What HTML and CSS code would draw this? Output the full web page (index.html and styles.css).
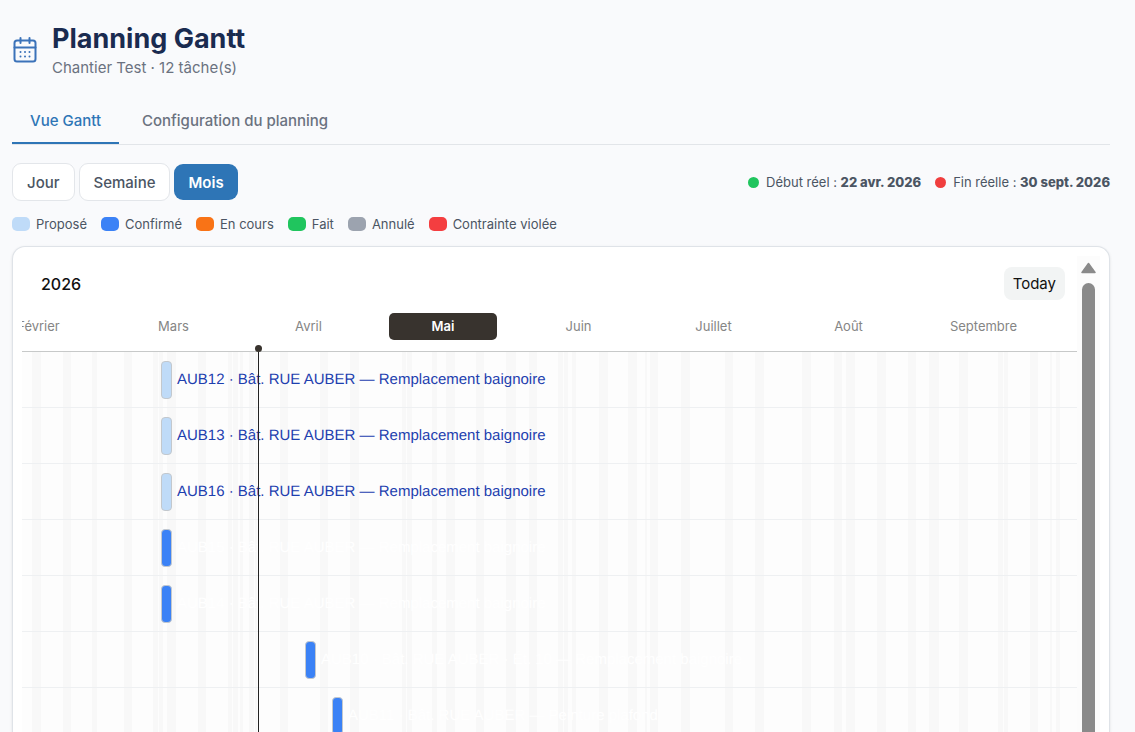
FILE: index.html
```html
<!DOCTYPE html>
<html lang="fr">
<head>
<meta charset="utf-8">
<meta name="viewport" content="width=device-width, initial-scale=1">
<title>Planning Gantt</title>
<link rel="stylesheet" href="styles.css">
</head>
<body>
<main class="page">
  <header class="page-header">
    <svg class="page-icon" viewBox="0 0 24 26" fill="none" stroke="currentColor" stroke-width="2" stroke-linecap="round" aria-hidden="true">
      <rect x="1.5" y="3.5" width="21" height="21" rx="2.5"/>
      <path d="M1.5 10.5h21M7.5 1v5M16.5 1v5"/>
      <path d="M7.5 15h.01M12 15h.01M16.5 15h.01M7.5 19.5h.01M12 19.5h.01M16.5 19.5h.01"/>
    </svg>
    <div>
      <h1 class="title">Planning Gantt</h1>
      <p class="subtitle">Chantier Test · 12 tâche(s)</p>
    </div>
  </header>

  <nav class="tabs" role="tablist">
    <button class="tab tab-active" type="button" role="tab" aria-selected="true">Vue Gantt</button>
    <button class="tab" type="button" role="tab" aria-selected="false">Configuration du planning</button>
  </nav>

  <div class="toolbar">
    <div class="modes">
      <button class="mode" type="button">Jour</button>
      <button class="mode" type="button">Semaine</button>
      <button class="mode mode-active" type="button">Mois</button>
    </div>
    <div class="dates">
      <span class="date"><i class="dot dot-start"></i><span>Début réel : <strong>22 avr. 2026</strong></span></span>
      <span class="date"><i class="dot dot-end"></i><span>Fin réelle : <strong>30 sept. 2026</strong></span></span>
    </div>
  </div>

  <ul class="legend">
    <li><i class="swatch proposed"></i>Proposé</li>
    <li><i class="swatch confirmed"></i>Confirmé</li>
    <li><i class="swatch progress"></i>En cours</li>
    <li><i class="swatch done"></i>Fait</li>
    <li><i class="swatch cancelled"></i>Annulé</li>
    <li><i class="swatch violated"></i>Contrainte violée</li>
  </ul>

  <section class="card">
    <div class="gantt">
      <div class="gantt-top">
        <span class="year">2026</span>
        <button class="today" type="button">Today</button>
      </div>
      <div class="months">
        <span class="month">Février</span>
        <span class="month">Mars</span>
        <span class="month">Avril</span>
        <span class="month month-current"><b>Mai</b></span>
        <span class="month">Juin</span>
        <span class="month">Juillet</span>
        <span class="month">Août</span>
        <span class="month">Septembre</span>
      </div>
      <div class="chart">
        <svg class="stripes" aria-hidden="true">
          <g>
            <rect x="10" width="9"/><rect x="41" width="8"/><rect x="70" width="5"/><rect x="102" width="8"/>
            <rect x="131" width="5"/><rect x="137" width="4"/><rect x="145" width="9"/><rect x="176" width="8"/>
            <rect x="206" width="4"/><rect x="211" width="5"/><rect x="218" width="3"/><rect x="227" width="5"/>
            <rect x="233" width="2"/><rect x="258" width="8"/><rect x="298" width="8"/><rect x="328" width="9"/>
            <rect x="380" width="4"/><rect x="385" width="5"/><rect x="410" width="5"/><rect x="424" width="9"/>
            <rect x="454" width="8"/><rect x="484" width="10"/><rect x="507" width="8"/><rect x="536" width="5"/>
            <rect x="542" width="4"/><rect x="550" width="4"/><rect x="577" width="9"/><rect x="606" width="9"/>
            <rect x="623" width="2"/><rect x="628" width="8"/><rect x="659" width="9"/><rect x="703" width="8"/>
            <rect x="733" width="9"/><rect x="780" width="9"/><rect x="812" width="8"/><rect x="824" width="9"/>
            <rect x="855" width="9"/><rect x="886" width="8"/><rect x="907" width="10"/><rect x="937" width="9"/>
            <rect x="976" width="5"/><rect x="982" width="4"/><rect x="1008" width="8"/><rect x="1028" width="2"/>
            <rect x="1034" width="4"/>
          </g>
        </svg>
        <ol class="rows">
          <li class="row at-march"><i class="bar proposed"></i><span class="label label-dark">AUB12 · Bât. RUE AUBER — Remplacement baignoire</span></li>
          <li class="row at-march"><i class="bar proposed"></i><span class="label label-dark">AUB13 · Bât. RUE AUBER — Remplacement baignoire</span></li>
          <li class="row at-march"><i class="bar proposed"></i><span class="label label-dark">AUB16 · Bât. RUE AUBER — Remplacement baignoire</span></li>
          <li class="row at-march"><i class="bar confirmed"></i><span class="label">AUB15 · Bât. RUE AUBER — Remplacement baignoire</span></li>
          <li class="row at-march"><i class="bar confirmed"></i><span class="label">AUB14 · Bât. RUE AUBER — Remplacement baignoire</span></li>
          <li class="row at-april"><i class="bar confirmed"></i><span class="label">AUB10 · Bât. RUE AUBER · Ét. 10 — Remplacement baignoire</span></li>
          <li class="row at-mid-april"><i class="bar confirmed"></i><span class="label">AUB11 · Bât. RUE AUBER — Peinture plafond</span></li>
        </ol>
        <div class="now"></div>
      </div>
    </div>
    <div class="scrollbar" aria-hidden="true">
      <svg class="arrow" viewBox="0 0 15 12"><path d="M7.5 1.5 14 10.5H1Z" fill="#8a8a8a" stroke="#8a8a8a" stroke-width="1.5" stroke-linejoin="round"/></svg>
      <div class="thumb"></div>
    </div>
  </section>
</main>
</body>
</html>
```
FILE: styles.css
```css
* { box-sizing: border-box; }

body {
  margin: 0;
  height: 100vh;
  overflow: hidden;
  background: #f9fafc;
  color: #4b5563;
  font-family: Inter, "Liberation Sans", sans-serif;
}

button { font: inherit; cursor: pointer; }

.page {
  display: flex;
  flex-direction: column;
  height: 100%;
  padding: 20px 25px 0 12px;
}

.page-header {
  display: flex;
  align-items: center;
  gap: 14px;
  height: 60px;
}

.page-icon { width: 24px; height: 26px; margin: 0 1px; color: #3b72b9; }

.title {
  margin: 0;
  color: #1a2b50;
  font-size: 27px;
  font-weight: 700;
  line-height: 36px;
}

.subtitle {
  margin: 0;
  color: #6b7280;
  font-size: 15px;
  line-height: 22px;
}

.tabs {
  display: flex;
  gap: 5px;
  margin-top: 19px;
  border-bottom: 1px solid #e2e5e9;
}

.tab {
  height: 45px;
  padding: 0 18px;
  border: 0;
  border-bottom: 2px solid transparent;
  background: none;
  color: #6b7280;
  font-size: 15px;
  font-weight: 500;
}

.tab-active { border-color: #2e75b6; color: #2e75b6; }

.toolbar {
  display: flex;
  justify-content: space-between;
  align-items: center;
  margin-top: 18px;
}

.modes { display: flex; align-items: center; gap: 4px; }

.mode {
  height: 38px;
  padding: 0 14px;
  border: 1px solid #e3e6ea;
  border-radius: 9px;
  background: #fff;
  color: #4b5563;
  font-size: 15px;
  font-weight: 500;
}

.mode-active {
  height: 36px;
  border: 0;
  background: #2e75b6;
  color: #fff;
  font-weight: 600;
}

.dates, .date { display: flex; align-items: center; }
.dates { gap: 14px; font-size: 13px; }
.date { gap: 7px; }
.date strong { font-weight: 800; }

.dot { width: 11px; height: 11px; border-radius: 50%; }
.dot-start { background: #20c55e; }
.dot-end { background: #f03e3e; }

.legend {
  display: flex;
  gap: 14px;
  margin: 13px 0 0;
  padding: 0;
  list-style: none;
  font-size: 13px;
  line-height: 20px;
}

.legend li { display: flex; align-items: center; gap: 6px; }
.swatch { width: 18px; height: 14px; border-radius: 5px; }

.proposed { background: #bfdbf8; }
.confirmed { background: #3b82f6; }
.progress { background: #f97316; }
.done { background: #20c55e; }
.cancelled { background: #9ca3af; }
.violated { background: #f43e40; }

.card {
  display: flex;
  flex: 1;
  min-height: 0;
  margin-top: 12px;
  padding: 9px 9px 0;
  border: 1px solid #dfe3e8;
  border-bottom: 0;
  border-radius: 13px 13px 0 0;
  background: #fff;
  box-shadow: 0 1px 3px #0000001a;
  overflow: hidden;
}

.gantt {
  display: flex;
  flex: 1;
  flex-direction: column;
  min-width: 0;
}

.gantt-top {
  display: flex;
  justify-content: space-between;
  align-items: center;
  padding: 11px 12px 0 19px;
  color: #111;
}

.year { font-size: 16px; font-weight: 500; }

.today {
  height: 33px;
  padding: 0 9px;
  border: 0;
  border-radius: 8px;
  background: #f2f4f4;
  color: #111;
  font-size: 15px;
}

.months {
  display: flex;
  height: 52px;
  padding-top: 13px;
  border-bottom: 1px solid #c7c9c9;
  overflow: hidden;
  color: #858585;
  font-size: 13px;
  line-height: 27px;
}

.month { flex: 0 0 135px; text-align: center; }
.month:first-child { margin-left: -51px; }

.month-current { padding: 0 14px 0 13px; }

.month-current b {
  display: block;
  border-radius: 5px;
  background: #38332e;
  color: #fff;
  font-weight: 600;
}

.chart {
  position: relative;
  flex: 1;
  min-height: 0;
  background: #fdfdfd;
}

.stripes {
  position: absolute;
  inset: 0;
  width: 100%;
  height: 100%;
}

.stripes rect { height: 100%; fill: #f8f8f8; }

.rows {
  position: relative;
  height: 100%;
  margin: 0;
  padding: 0;
  overflow: hidden;
  list-style: none;
}

.row {
  display: flex;
  align-items: center;
  gap: 5px;
  height: 56px;
  border-bottom: 1px solid #eef0f2;
}

.at-march { padding-left: 139px; }
.at-april { padding-left: 283px; }
.at-mid-april { padding-left: 310px; }

.bar {
  width: 11px;
  height: 38px;
  border: 1px solid #c3c8cd;
  border-radius: 4px;
}

.label {
  color: #fff;
  font-family: "Liberation Sans", Arial, sans-serif;
  font-size: 15px;
  text-rendering: geometricPrecision;
  white-space: nowrap;
}

.label-dark { color: #1e40af; }

.now {
  position: absolute;
  top: 0;
  bottom: 0;
  left: 236px;
  width: 1px;
  background: #222;
}

.now::before {
  content: "";
  position: absolute;
  top: -7px;
  left: -3px;
  width: 7px;
  height: 7px;
  border-radius: 50%;
  background: #38332e;
}

.scrollbar {
  display: flex;
  flex: 0 0 23px;
  flex-direction: column;
  align-items: center;
  gap: 9px;
  padding-top: 6px;
  background: #fcfcfc;
}

.arrow { width: 15px; height: 12px; }

.thumb {
  flex: 1;
  width: 13px;
  border-radius: 7px 7px 0 0;
  background: #8a8a8a;
}
```
